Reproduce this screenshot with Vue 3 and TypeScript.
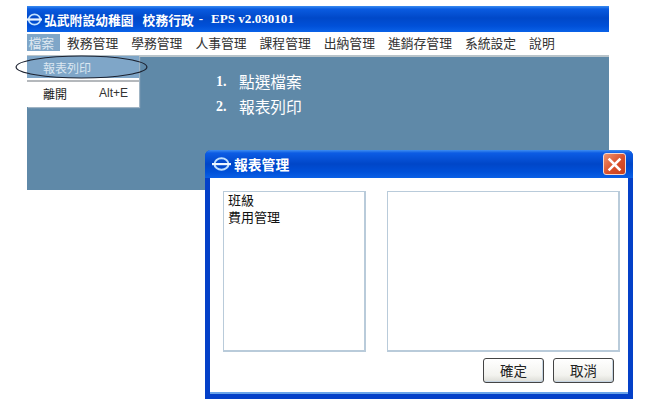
<script setup lang="ts">
const menus: string[] = ['教務管理', '學務管理', '人事管理', '課程管理', '出納管理', '進銷存管理', '系統設定', '說明']
</script>

<template>
  <div class="page">
    <div class="app">
      <div class="titlebar">
        <svg class="logo" width="15" height="13" viewBox="0 0 15 13"><ellipse cx="7.5" cy="6.5" rx="5.8" ry="5.2" fill="none" stroke="#bfe0ff" stroke-width="1.7"/><rect x="0" y="5.4" width="15" height="2.2" fill="#e8f4ff"/></svg>
        <span class="apptitle">弘武附設幼稚園</span>
        <span class="apptitle sys">校務行政</span>
        <span class="apptitle dash">-</span>
        <span class="apptitle ver">EPS v2.030101</span>
      </div>
      <div class="menubar">
        <span class="menu active">檔案</span>
        <span v-for="m in menus" :key="m" class="menu">{{ m }}</span>
      </div>
      <div class="desk">
        <ol class="steps">
          <li><span class="num">1.</span>點選檔案</li>
          <li><span class="num">2.</span>報表列印</li>
        </ol>
      </div>
      <div class="dropdown">
        <div class="ditem sel">報表列印</div>
        <div class="sep"></div>
        <div class="ditem"><span>離開</span><span class="key">Alt+E</span></div>
      </div>
      <svg class="ring" width="136" height="26" viewBox="0 0 136 26"><ellipse cx="67.5" cy="13" rx="65.4" ry="11" fill="none" stroke="#1c2230" stroke-width="1.2"/></svg>
    </div>

    <div class="dialog">
      <div class="dtitle">
        <svg class="dlogo" width="19" height="14" viewBox="0 0 19 14"><ellipse cx="9.5" cy="7" rx="7" ry="5.8" fill="none" stroke="#bfe0ff" stroke-width="2"/><rect x="0" y="6" width="19" height="2.2" fill="#eef7ff"/></svg>
        <span class="dname">報表管理</span>
        <span class="close">
          <svg width="15" height="15" viewBox="0 0 15 15"><path d="M2.5 2.5 12.5 12.5M12.5 2.5 2.5 12.5" stroke="#fff" stroke-width="2.5" stroke-linecap="square"/></svg>
        </span>
      </div>
      <div class="dbody">
        <div class="lists">
          <div class="list left">
            <div class="first">班級</div>
            <div class="second">費用管理</div>
          </div>
          <div class="list right"></div>
        </div>
        <div class="actions">
          <button class="btn" type="button">確定</button>
          <button class="btn" type="button">取消</button>
        </div>
      </div>
    </div>
  </div>
</template>

<style>
html, body { margin: 0; background: #fff; }
</style>

<style scoped>
.page {
  position: relative;
  width: 650px;
  height: 407px;
  overflow: hidden;
  background: #fff;
  padding: 6px 0 0 27px;
  box-sizing: border-box;
  font-family: "Noto Sans CJK TC", "Liberation Sans", sans-serif;
  color: #1c1c1c;
}
.app { position: relative; width: 582px; }
.titlebar {
  height: 26px;
  display: flex;
  align-items: center;
  background: linear-gradient(#3a8cf0 0, #0a5be0 3px, #0048c8 12px, #0050d8 20px, #0a62e8 26px);
  color: #fff;
}
.logo { margin-right: 2px; flex: none; }
.apptitle {
  font-family: "Liberation Serif", "Noto Sans CJK TC", serif;
  font-weight: 700;
  font-size: 12.8px;
  white-space: nowrap;
}
.sys { margin-left: 9px; }
.dash { margin-left: 5px; }
.ver { margin-left: 8px; font-size: 13.1px; }
.menubar {
  height: 21px;
  padding-bottom: 2px;
  display: flex;
  align-items: center;
  font-size: 12.8px;
  border-bottom: 2px solid #b9c4ca;
  box-sizing: content-box;
  color: #333;
}
.menu { margin-left: 13px; white-space: nowrap; line-height: 17px; }
.menu.active {
  margin-left: 0;
  width: 33px;
  margin-right: -6px;
  padding-left: 1.5px;
  box-sizing: border-box;
  background: #7fa6c8;
  color: #dfe9f2;
}
.desk {
  height: 133px;
  background: #5f89a8;
  color: #fff;
}
.steps {
  list-style: none;
  margin: 0;
  padding: 13px 0 0 189px;
  font-size: 15.7px;
  line-height: 24.5px;
}
.steps li { display: flex; }
.num {
  width: 23px;
  font-family: "Liberation Serif", serif;
  font-weight: 700;
  font-size: 14px;
}
.dropdown {
  position: absolute;
  left: 0;
  top: 50px;
  width: 112px;
  height: 51px;
  background: #fff;
  font-size: 12px;
  box-shadow: 1px 1px 1px #9fb4c4;
}
.ditem {
  height: 24px;
  display: flex;
  align-items: center;
  justify-content: space-between;
  padding: 0 11px 0 16px;
  box-sizing: border-box;
  line-height: 17px;
}
.ditem.sel {
  height: 22px;
  padding-top: 1px;
  background: #7fa6c8;
  color: #dbe7f1;
}
.sep { height: 2px; margin-top: 2px; margin-bottom: -1px; background: #b4b8bc; }
.key { font-family: "Liberation Sans", sans-serif; color: #333; padding-top: 1px; }
.ring { position: absolute; left: -13px; top: 48px; }

.dialog {
  position: absolute;
  left: 205px;
  top: 150px;
  width: 428px;
  height: 249px;
  box-sizing: border-box;
  border: 5px solid #0440c8;
  border-top: 0;
  border-radius: 6px 6px 0 0;
  display: flex;
  flex-direction: column;
  background: #fff;
  box-shadow: inset 0 -2px 0 #6aa4ea;
}
.dtitle {
  height: 28px;
  margin: 0 -5px;
  flex: none;
  display: flex;
  align-items: center;
  padding: 0 7px 0 7px;
  border-radius: 6px 6px 0 0;
  background: linear-gradient(#3f8ef0 0, #0c5ce4 3px, #0046c8 14px, #0050d8 22px, #0a60e6 28px);
  color: #fff;
}
.dlogo { flex: none; margin-right: 3px; }
.dname { font-size: 13.8px; font-weight: 700; flex: 1; }
.close {
  width: 23px;
  height: 22px;
  flex: none;
  display: flex;
  align-items: center;
  justify-content: center;
  box-sizing: border-box;
  border: 1px solid #f3d8cf;
  border-radius: 3px;
  background: linear-gradient(135deg, #ee9470, #d9502a 55%, #c83f1c);
}
.dbody {
  flex: 1;
  display: flex;
  flex-direction: column;
  padding: 13px 8px 0 13px;
}
.lists { display: flex; gap: 21px; }
.list {
  height: 161px;
  box-sizing: border-box;
  border: 1px solid #b9cbda;
  border-right-width: 2px;
  border-bottom-width: 2px;
  background: #fff;
}
.left {
  width: 143px;
  padding: 0 0 0 4px;
  font-size: 13px;
  color: #111;
}
.first { line-height: 16px; }
.second { line-height: 18px; }
.right { width: 233px; }
.actions {
  display: flex;
  justify-content: flex-end;
  gap: 9px;
  margin: 6px 6px 0 0;
}
.btn {
  width: 61px;
  height: 25px;
  padding: 0;
  font-family: inherit;
  font-size: 13.5px;
  line-height: 1;
  color: #222;
  border: 1px solid #444;
  border-radius: 3px;
  background: linear-gradient(#fff, #f3f3ef 70%, #dcdcd6);
  box-shadow: inset -1px -1px 0 #c5d4e2;
}
</style>
